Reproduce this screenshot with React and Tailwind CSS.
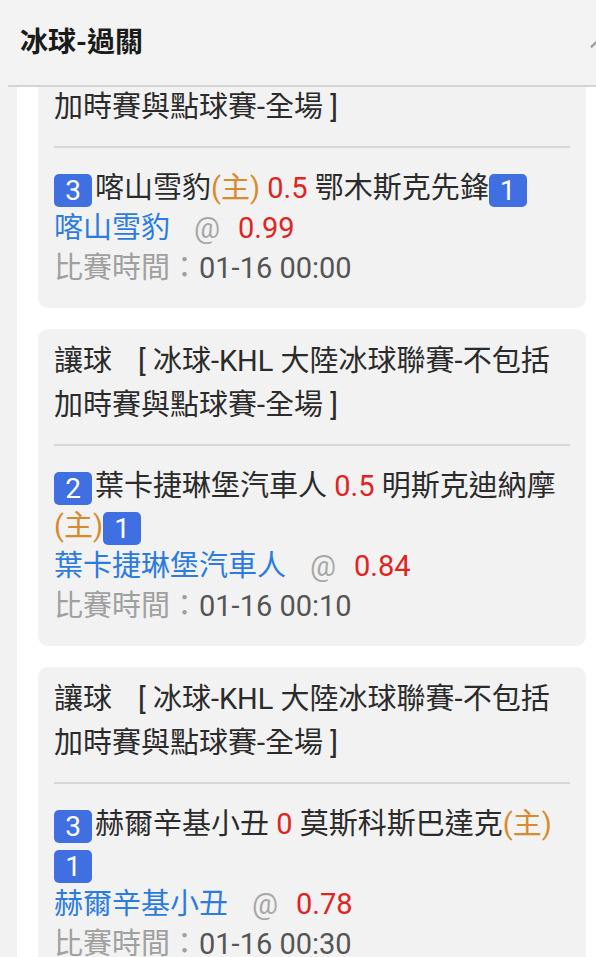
const bets = [
  {
    id: 1,
    league: '冰球-KHL 大陸冰球聯賽-不包括加時賽與點球賽-全場',
    home: '喀山雪豹',
    homeScore: 3,
    away: '鄂木斯克先鋒',
    awayScore: 1,
    hostSide: 'home',
    handicap: '0.5',
    pick: '喀山雪豹',
    odds: '0.99',
    time: '01-16 00:00',
  },
  {
    id: 2,
    league: '冰球-KHL 大陸冰球聯賽-不包括加時賽與點球賽-全場',
    home: '葉卡捷琳堡汽車人',
    homeScore: 2,
    away: '明斯克迪納摩',
    awayScore: 1,
    hostSide: 'away',
    handicap: '0.5',
    pick: '葉卡捷琳堡汽車人',
    odds: '0.84',
    time: '01-16 00:10',
  },
  {
    id: 3,
    league: '冰球-KHL 大陸冰球聯賽-不包括加時賽與點球賽-全場',
    home: '赫爾辛基小丑',
    homeScore: 3,
    away: '莫斯科斯巴達克',
    awayScore: 1,
    hostSide: 'away',
    handicap: '0',
    pick: '赫爾辛基小丑',
    odds: '0.78',
    time: '01-16 00:30',
  },
];

function Score({ value }) {
  return (
    <span className="inline-block h-[33px] w-[38px] rounded-[5px] bg-[#3f6fe0] text-center align-middle text-[28px] leading-[33px] text-white">
      {value}
    </span>
  );
}

function Host() {
  return <span className="text-[#d88a2c]">(主)</span>;
}

function BetCard({ bet }) {
  return (
    <div className="rounded-[10px] bg-[#f2f2f2] px-4 pt-[10px] pb-5">
      <p className="leading-[44px] text-[#2b2b2b]">
        <span className="mr-[26px]">讓球</span>[ {bet.league} ]
      </p>
      <div className="mt-[17px] mb-5 h-[2px] bg-[#d6d6d6]" />
      <p className="leading-[40px] text-[#2b2b2b]">
        <Score value={bet.homeScore} />
        <span className="ml-[3px]">{bet.home}</span>
        {bet.hostSide === 'home' && <Host />}
        <span className="text-[#e0241f]"> {bet.handicap} </span>
        {bet.away}
        {bet.hostSide === 'away' && <Host />}
        <Score value={bet.awayScore} />
      </p>
      <p className="leading-[40px]">
        <span className="text-[#2c7be0]">{bet.pick}</span>
        <span className="ml-[24px] mr-[18px] text-[#a8a8a8]">@</span>
        <span className="text-[#e0241f]">{bet.odds}</span>
      </p>
      <p className="leading-[40px]">
        <span className="text-[#a0a0a0]">比賽時間：</span>
        <span className="text-[#555555]">{bet.time}</span>
      </p>
    </div>
  );
}

export default function App() {
  return (
    <div className="flex h-[957px] flex-col overflow-hidden bg-white font-['Roboto','Noto_Sans_CJK_TC',sans-serif] text-[29px]">
      <header className="flex h-[85px] shrink-0 items-center justify-between overflow-hidden bg-[#f3f3f3] pl-5">
        <h1 className="text-[28px] font-bold text-[#1a1a1a]">冰球-過關</h1>
        <svg className="-mr-[14px] h-[22px] w-[22px] text-[#a0a0a0]" viewBox="0 0 24 24" fill="none" stroke="currentColor" strokeWidth="2.5" strokeLinecap="round">
          <path d="M4 16l8-8 8 8" />
        </svg>
      </header>
      <div className="flex shrink-0 bg-[#f3f3f3]">
        <div className="ml-2 h-[2px] flex-1 bg-[#d4d4d4]" />
      </div>
      <div className="flex min-h-0 flex-1 overflow-hidden">
        <div className="w-[17px] shrink-0 bg-[#f2f2f2]" />
        <div className="flex-1 pl-[21px] pr-[10px]">
          <div className="-mt-[56px] flex flex-col gap-[21px]">
            {bets.map((bet) => (
              <BetCard key={bet.id} bet={bet} />
            ))}
          </div>
        </div>
      </div>
    </div>
  );
}
